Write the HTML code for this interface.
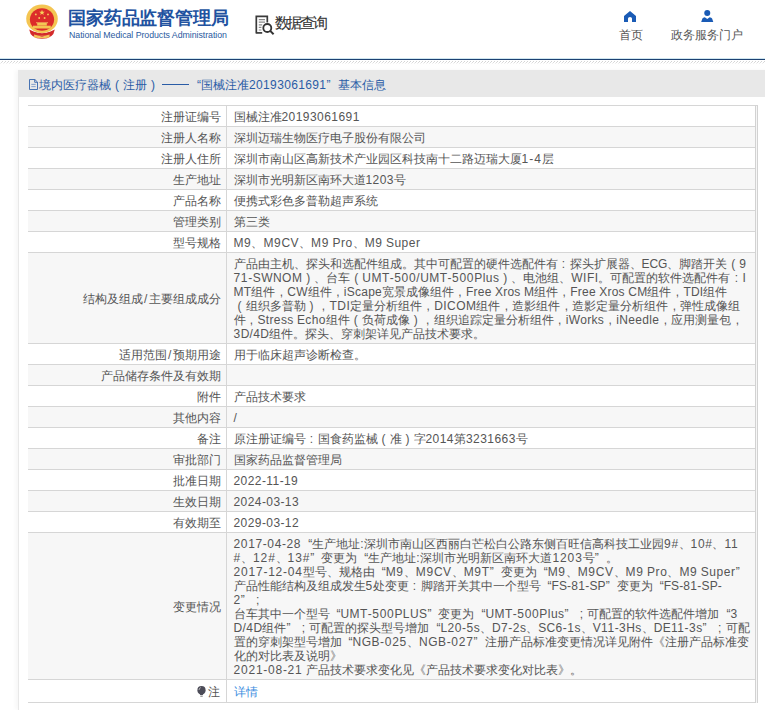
<!DOCTYPE html>
<html><head><meta charset="utf-8">
<style>
*{margin:0;padding:0;box-sizing:border-box}
html,body{width:765px;height:710px;overflow:hidden;background:#fff;font-family:"Liberation Sans",sans-serif;}
.hdr{position:absolute;left:0;top:0;width:765px;height:58px;background:#fff}
.emb{position:absolute;left:22px;top:2px;width:40px;height:40px}
.t1{position:absolute;left:68px;top:7px;font-size:18px;font-weight:900;color:#2152a0;white-space:nowrap;line-height:22px;letter-spacing:-0.15px}
.t2{position:absolute;left:69px;top:30px;font-size:8.8px;color:#2a5aa0;white-space:nowrap;line-height:11px;letter-spacing:-0.05px}
.sj{position:absolute;left:255px;top:15px;width:20px;height:20px}
.sjt{position:absolute;left:274.5px;top:13px;font-size:15px;color:#333;-webkit-text-stroke:0.12px #333;line-height:20px;white-space:nowrap;letter-spacing:-2.2px}
.nav{position:absolute;font-size:12px;color:#555;line-height:14px;white-space:nowrap}
.blue{position:absolute;left:0;top:59px;width:765px;height:1px;background:#1d4272;box-shadow:0 -1px 0 #cfe6f0}
.hatch{position:absolute;left:0;top:61px;width:765px;height:3px}
.panel{position:absolute;left:18px;top:70px;width:760px;height:640px;border-left:1px solid #e8e8e8;box-shadow:-3px 0 4px rgba(0,0,0,0.03)}
.ptitle{--x:0px;position:absolute;left:0;top:0;width:760px;height:27px;background:#e8e8e8;color:#2a5ca6;font-size:12px;line-height:30px;padding-left:10px;white-space:nowrap}
.dash{display:inline-block;width:26.5px;height:1px;background:#2a5ca6;vertical-align:4px;margin:0 1.5px 0 3px}
.ptitle svg{width:9px;height:11px;vertical-align:-1px;margin-right:1px}
table{position:absolute;left:28px;top:105px;width:728px;border-collapse:collapse;table-layout:fixed;font-size:12px;color:#555}
td{--x:0px;border-top:1px solid #d6d6d6;border-bottom:1px solid #d6d6d6;padding:3.5px 4px 2.5px 7px;line-height:14px;white-space:nowrap;vertical-align:middle}
td.l{width:198px;text-align:right;border-right:1px solid #d6d6d6;padding-right:4.5px}
tr:nth-child(even) td{background:#f7f7f7}
.d{letter-spacing:calc(0.45px + var(--x))}.a{letter-spacing:calc(0.2px + var(--x))}.h{letter-spacing:calc(0.3px + var(--x))}.p{letter-spacing:calc(0.3px + var(--x))}.sp{}.sl{display:inline-block;width:6.5px;text-align:center}.fw{display:inline-block;width:12px;text-align:center}.ql{display:inline-block;width:11px;text-align:right}.qr{display:inline-block;width:11px;text-align:left}
.rb{position:absolute;left:755px;top:105px;width:3px;height:598px;border-left:1px solid #d2d2d2;border-right:1px solid #d2d2d2;border-top:1px solid #d6d6d6;background:#f6f6f6}
a{color:#3b8de0;text-decoration:none}
.bulb{width:9px;height:11px;vertical-align:-1px;margin-right:2.5px}
tr.last td{height:23px;padding-top:4px;padding-bottom:2px}tr.last td.l{padding-right:5.5px}
</style></head><body>
<div class="hdr">
  <svg class="emb" viewBox="0 0 40 40">
    <path d="M7.2 27.5 Q8.5 36.8 20 36.8 Q31.5 36.8 32.8 27.5 L28.5 29.5 Q20 33 11.5 29.5Z" fill="#d32a2a"/>
    <ellipse cx="20" cy="16.8" rx="15.8" ry="14.2" fill="#f4c552"/>
    <ellipse cx="20" cy="17.6" rx="12.1" ry="11.4" fill="#dc2c2a"/>
    <rect x="11" y="23.7" width="17.8" height="2.8" fill="#f4c552"/>
    <rect x="15.2" y="21" width="9.6" height="2.6" fill="#f4c552"/>
    <rect x="14" y="20.4" width="12" height="0.8" fill="#f6d068"/>
    <path d="M12 26.5 Q20 31 28 26.5 L29.5 28 Q20 33.5 10.5 28Z" fill="#f4c552"/>
    <path d="M20 7.8 l0.75 2 h2.1 l-1.7 1.25 l0.65 2 l-1.8-1.25 l-1.8 1.25 l0.65-2 l-1.7-1.25 h2.1z" fill="#f7d35a"/>
    <circle cx="13.8" cy="12.4" r="0.95" fill="#f5c95a"/><circle cx="26" cy="12.4" r="0.95" fill="#f5c95a"/>
    <circle cx="17.2" cy="16" r="0.95" fill="#f5c95a"/><circle cx="22.6" cy="16" r="0.95" fill="#f5c95a"/>
    <path d="M12 32.6 Q20 35.2 27.6 32.6 L27.4 35.4 Q20 37 12.2 35.4Z" fill="#f2c45a"/>
    <rect x="18.5" y="33.4" width="3" height="1.6" fill="#e06a50"/>
  </svg>
  <div class="t1">国家药品监督管理局</div>
  <div class="t2">National Medical Products Administration</div>
  <svg class="sj" viewBox="0 0 20 20">
    <path d="M1.3 18.6 V1.3 H12.3 V7.5" fill="none" stroke="#3a3a3a" stroke-width="1.7"/>
    <path d="M1.3 17.9 H7.2" fill="none" stroke="#3a3a3a" stroke-width="1.7"/>
    <path d="M3.8 4.6 H10 M3.8 7.2 H10 M3.8 9.8 H7.2 M3.8 12.4 H6.4 M3.8 15 H6.4" stroke="#8a8a8a" stroke-width="1.2"/>
    <circle cx="12.3" cy="13" r="4" fill="none" stroke="#333" stroke-width="1.8"/>
    <path d="M15.2 15.9 L18.6 19.3" stroke="#333" stroke-width="2"/>
  </svg>
  <div class="sjt">数据查询</div>
  <svg style="position:absolute;left:624px;top:11px;width:12px;height:11px" viewBox="0 0 12 11"><path d="M6 0 L12 5 V11 H8 V7.5 Q8 6 6 6 Q4 6 4 7.5 V11 H0 V5Z" fill="#1a5bb5"/></svg>
  <div class="nav" style="left:619px;top:28px">首页</div>
  <svg style="position:absolute;left:701px;top:10px;width:12.5px;height:12px" viewBox="0 0 12.5 12"><circle cx="6.25" cy="3.1" r="3" fill="#1a5bb5"/><path d="M0.2 12 L1.4 8.6 Q2 7.3 3.8 7.2 L6.25 9 L8.7 7.2 Q10.5 7.3 11.1 8.6 L12.3 12Z" fill="#1a5bb5"/></svg>
  <div class="nav" style="left:670.5px;top:28px">政务服务门户</div>
</div>
<div class="blue"></div>
<svg class="hatch" width="765" height="3"><defs><pattern id="hp" width="3" height="3" patternUnits="userSpaceOnUse"><rect x="2" y="0" width="1" height="1" fill="#d4d4d4"/><rect x="1" y="1" width="1" height="1" fill="#dcdcdc"/><rect x="0" y="2" width="1" height="1" fill="#f0f0f0"/></pattern></defs><rect width="765" height="3" fill="url(#hp)"/></svg>
<div class="panel"><div class="ptitle"><svg viewBox="0 0 9 11"><path d="M0.5 0.5 H5.9 L8.5 3.1 V10.5 H0.5Z M5.7 0.5 V3.3 H8.5" fill="none" stroke="#3565ad" stroke-width="0.9"/><path d="M2.3 5.4 H6.7 M2.3 7.6 H6.7" stroke="#6f8fc4" stroke-width="0.8"/></svg>境内医疗器械<span class="fw">(</span>注册<span class="fw">)</span><span class="dash"></span><span class="ql">“</span>国械注准<span class="d" style="--x:-0.09px">20193061691</span><span class="qr">”</span><span style="margin-left:1px">基本信息</span></div></div>
<table>
<tr><td class="l">注册证编号</td><td class="r">国械注准<span class="d">20193061691</span></td></tr>
<tr><td class="l">注册人名称</td><td class="r">深圳迈瑞生物医疗电子股份有限公司</td></tr>
<tr><td class="l">注册人住所</td><td class="r"><span style="--x:0.600px">深圳市南山区高新技术产业园区科技南十二路迈瑞大厦<span class="d">1</span><span class="h">-</span><span class="d">4</span>层</span></td></tr>
<tr><td class="l">生产地址</td><td class="r">深圳市光明新区南环大道<span class="d">1203</span>号</td></tr>
<tr><td class="l">产品名称</td><td class="r">便携式彩色多普勒超声系统</td></tr>
<tr><td class="l">管理类别</td><td class="r">第三类</td></tr>
<tr><td class="l">型号规格</td><td class="r"><span style="--x:0.310px"><span class="a">M</span><span class="d">9</span>、<span class="a">M</span><span class="d">9</span><span class="a">CV</span>、<span class="a">M</span><span class="d">9</span> <span class="a">Pro</span>、<span class="a">M</span><span class="d">9</span> <span class="a">Super</span></span></td></tr>
<tr><td class="l">结构及组成<span class="sl">/</span>主要组成成分</td><td class="r"><span style="--x:-0.300px">产品由主机、探头和选配件组成。其中可配置的硬件选配件有<span class="fw">:</span>探头扩展器、<span class="a">ECG</span>、脚踏开关<span class="fw">(</span><span class="d">9</span></span><br><span style="--x:0.244px"><span class="d">71</span><span class="h">-</span><span class="a">SWNOM</span><span class="fw">)</span>、台车<span class="fw">(</span><span class="a">UMT</span><span class="h">-</span><span class="d">500</span><span class="p">/</span><span class="a">UMT</span><span class="h">-</span><span class="d">500</span><span class="a">Plus</span><span class="fw">)</span>、电池组、<span class="a">WIFI</span>。可配置的软件选配件有<span class="fw">:</span><span class="a">I</span></span><br><span style="--x:0.044px"><span class="a">MT</span>组件<span class="fw">,</span><span class="a">CW</span>组件<span class="fw">,</span><span class="a">iScape</span>宽景成像组件<span class="fw">,</span><span class="a">Free</span> <span class="a">Xros</span> <span class="a">M</span>组件<span class="fw">,</span><span class="a">Free</span> <span class="a">Xros</span> <span class="a">CM</span>组件<span class="fw">,</span><span class="a">TDI</span>组件</span><br><span style="--x:0.250px"><span class="fw">(</span>组织多普勒<span class="fw">)</span><span class="fw">,</span><span class="a">TDI</span>定量分析组件<span class="fw">,</span><span class="a">DICOM</span>组件<span class="fw">,</span>造影组件<span class="fw">,</span>造影定量分析组件<span class="fw">,</span>弹性成像组</span><br><span style="--x:0.146px">件<span class="fw">,</span><span class="a">Stress</span> <span class="a">Echo</span>组件<span class="fw">(</span>负荷成像<span class="fw">)</span><span class="fw">,</span>组织追踪定量分析组件<span class="fw">,</span><span class="a">iWorks</span><span class="fw">,</span><span class="a">iNeedle</span><span class="fw">,</span>应用测量包<span class="fw">,</span></span><br><span class="d">3</span><span class="a">D</span><span class="p">/</span><span class="d">4</span><span class="a">D</span>组件。探头、穿刺架详见产品技术要求。</td></tr>
<tr><td class="l">适用范围<span class="sl">/</span>预期用途</td><td class="r">用于临床超声诊断检查。</td></tr>
<tr><td class="l">产品储存条件及有效期</td><td class="r"></td></tr>
<tr><td class="l">附件</td><td class="r">产品技术要求</td></tr>
<tr><td class="l">其他内容</td><td class="r"><span class="p">/</span></td></tr>
<tr><td class="l">备注</td><td class="r">原注册证编号<span class="fw">:</span>国食药监械<span class="fw">(</span>准<span class="fw">)</span>字<span class="d">2014</span>第<span class="d">3231663</span>号</td></tr>
<tr><td class="l">审批部门</td><td class="r">国家药品监督管理局</td></tr>
<tr><td class="l">批准日期</td><td class="r"><span class="d">2022</span><span class="h">-</span><span class="d">11</span><span class="h">-</span><span class="d">19</span></td></tr>
<tr><td class="l">生效日期</td><td class="r"><span class="d">2024</span><span class="h">-</span><span class="d">03</span><span class="h">-</span><span class="d">13</span></td></tr>
<tr><td class="l">有效期至</td><td class="r"><span class="d">2029</span><span class="h">-</span><span class="d">03</span><span class="h">-</span><span class="d">12</span></td></tr>
<tr><td class="l">变更情况</td><td class="r"><span style="--x:0.206px"><span class="d">2017</span><span class="h">-</span><span class="d">04</span><span class="h">-</span><span class="d">28</span><span class="ql">“</span>生产地址<span class="p">:</span>深圳市南山区西丽白芒松白公路东侧百旺信高科技工业园<span class="d">9</span><span class="p">#</span>、<span class="d">10</span><span class="p">#</span>、<span class="d">11</span></span><br><span style="--x:0.475px"><span class="p">#</span>、<span class="d">12</span><span class="p">#</span>、<span class="d">13</span><span class="p">#</span><span class="qr">”</span>变更为<span class="ql">“</span>生产地址<span class="p">:</span>深圳市光明新区南环大道<span class="d">1203</span>号<span class="qr">”</span>。</span><br><span style="--x:0.364px"><span class="d">2017</span><span class="h">-</span><span class="d">12</span><span class="h">-</span><span class="d">04</span>型号、规格由<span class="ql">“</span><span class="a">M</span><span class="d">9</span>、<span class="a">M</span><span class="d">9</span><span class="a">CV</span>、<span class="a">M</span><span class="d">9</span><span class="a">T</span><span class="qr">”</span>变更为<span class="ql">“</span><span class="a">M</span><span class="d">9</span>、<span class="a">M</span><span class="d">9</span><span class="a">CV</span>、<span class="a">M</span><span class="d">9</span> <span class="a">Pro</span>、<span class="a">M</span><span class="d">9</span> <span class="a">Super</span><span class="qr">”</span></span><br><span style="--x:-0.111px">产品性能结构及组成发生<span class="d">5</span>处变更<span class="fw">:</span>脚踏开关其中一个型号<span class="ql">“</span><span class="a">FS</span><span class="h">-</span><span class="d">81</span><span class="h">-</span><span class="a">SP</span><span class="qr">”</span>变更为<span class="ql">“</span><span class="a">FS</span><span class="h">-</span><span class="d">81</span><span class="h">-</span><span class="a">SP</span><span class="h">-</span></span><br><span class="d">2</span><span class="qr">”</span><span class="fw">;</span><br><span style="--x:0.230px">台车其中一个型号<span class="ql">“</span><span class="a">UMT</span><span class="h">-</span><span class="d">500</span><span class="a">PLUS</span><span class="qr">”</span>变更为<span class="ql">“</span><span class="a">UMT</span><span class="h">-</span><span class="d">500</span><span class="a">Plus</span><span class="qr">”</span><span class="fw">;</span>可配置的软件选配件增加<span class="ql">“</span><span class="d">3</span></span><br><span style="--x:0.117px"><span class="a">D</span><span class="p">/</span><span class="d">4</span><span class="a">D</span>组件<span class="qr">”</span><span class="fw">;</span>可配置的探头型号增加<span class="ql">“</span><span class="a">L</span><span class="d">20</span><span class="h">-</span><span class="d">5</span><span class="a">s</span>、<span class="a">D</span><span class="d">7</span><span class="h">-</span><span class="d">2</span><span class="a">s</span>、<span class="a">SC</span><span class="d">6</span><span class="h">-</span><span class="d">1</span><span class="a">s</span>、<span class="a">V</span><span class="d">11</span><span class="h">-</span><span class="d">3</span><span class="a">Hs</span>、<span class="a">DE</span><span class="d">11</span><span class="h">-</span><span class="d">3</span><span class="a">s</span><span class="qr">”</span><span class="fw">;</span>可配</span><br><span style="--x:0.321px">置的穿刺架型号增加<span class="ql">“</span><span class="a">NGB</span><span class="h">-</span><span class="d">025</span>、<span class="a">NGB</span><span class="h">-</span><span class="d">027</span><span class="qr">”</span>注册产品标准变更情况详见附件《注册产品标准变</span><br>化的对比表及说明》<br><span style="--x:0.336px"><span class="d">2021</span><span class="h">-</span><span class="d">08</span><span class="h">-</span><span class="d">21</span> 产品技术要求变化见《产品技术要求变化对比表》。</span></td></tr>
<tr class="last"><td class="l"><svg class="bulb" viewBox="0 0 9 11"><circle cx="4.5" cy="4.2" r="4.1" fill="#4c4c58"/><path d="M2.2 7 L3.2 9 H5.8 L6.8 7Z" fill="#4c4c58"/><path d="M3.3 9.7 H5.7 V10.6 H3.3Z" fill="#666"/><path d="M2 4 Q2.2 2 3.8 1.6" stroke="#ddd" stroke-width="0.7" fill="none"/></svg>注</td><td class="r"><a>详情</a></td></tr>
</table>
<div class="rb"></div>
</body></html>
